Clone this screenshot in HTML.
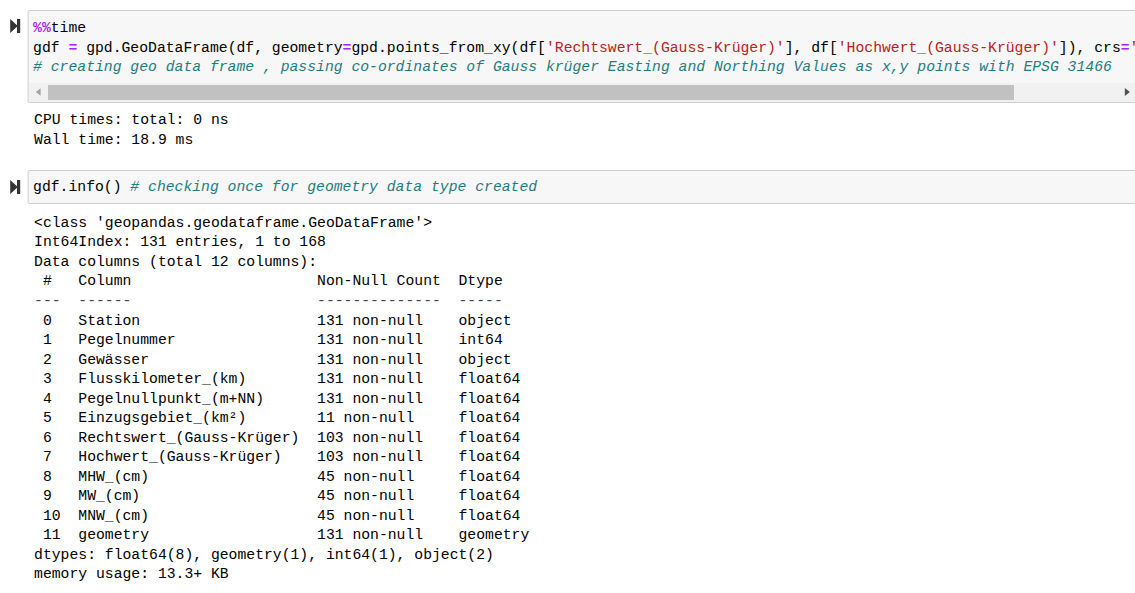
<!DOCTYPE html>
<html><head><meta charset="utf-8">
<style>
html,body{margin:0;padding:0;background:#fff;}
body{width:1135px;height:593px;overflow:hidden;position:relative;font-family:"Liberation Mono","DejaVu Sans Mono",monospace;font-size:14.74px;color:#000;}
pre{margin:0;font:inherit;white-space:pre;position:absolute;line-height:19.53px;}
.box{position:absolute;left:28px;transform:translateX(-0.4px);width:1200px;background:#f7f7f7;border:1px solid #cfcfcf;border-radius:2px;box-sizing:border-box;}
.op{color:#aa22ff;font-weight:bold;}.m{color:#aa22ff;font-weight:bold;}
.s{color:#ba2121;}
.c{color:#1f7c80;font-style:italic;}
.icon{position:absolute;left:10.3px;width:10.4px;height:14px;}
</style></head><body>
<div class="box" style="top:10px;height:93px;"></div>
<svg class="icon" style="top:19px" viewBox="0 0 10.4 14"><path d="M0.2 0 L7.8 7 L0.2 14 Z M7 0 H10.2 V14 H7 Z" fill="#333"/></svg>
<pre style="left:33.1px;top:18.8px;line-height:19.75px;"><span class="m">%%</span>time
gdf <span class="op">=</span> gpd.GeoDataFrame(df, geometry<span class="op">=</span>gpd.points_from_xy(df[<span class="s">'Rechtswert_(Gauss-Krüger)'</span>], df[<span class="s">'Hochwert_(Gauss-Krüger)'</span>]), crs<span class="op">=</span><span class="s">'</span>
<span class="c"># creating geo data frame , passing co-ordinates of Gauss krüger Easting and Northing Values as x,y points with EPSG 31466</span></pre>
<div style="position:absolute;left:29px;top:83px;width:1110px;height:19px;background:#f1f1f1;"></div>
<div style="position:absolute;left:48px;top:85px;width:966px;height:15px;background:#c1c1c1;"></div>
<svg style="position:absolute;left:34px;top:87px;width:10px;height:10px" viewBox="0 0 10 10"><path d="M6.6 1.3 L1.8 5 L6.6 8.7 Z" fill="#a3a3a3"/></svg>
<svg style="position:absolute;left:1120px;top:86px;width:12px;height:12px" viewBox="0 0 12 12"><path d="M4.8 1.9 L9.9 6 L4.8 10.1 Z" fill="#505050"/></svg>
<pre style="left:34.1px;top:111.3px;">CPU times: total: 0 ns
Wall time: 18.9 ms</pre>
<div class="box" style="top:170px;height:34px;"></div>
<svg class="icon" style="top:180px" viewBox="0 0 10.4 14"><path d="M0.2 0 L7.8 7 L0.2 14 Z M7 0 H10.2 V14 H7 Z" fill="#333"/></svg>
<pre style="left:33.1px;top:178.4px;">gdf.info() <span class="c"># checking once for geometry data type created</span></pre>
<pre style="left:34.1px;top:213.9px;">&lt;class 'geopandas.geodataframe.GeoDataFrame'&gt;
Int64Index: 131 entries, 1 to 168
Data columns (total 12 columns):
 #   Column                     Non-Null Count  Dtype   
<span style="color:#444">---  ------                     --------------  -----   </span>
 0   Station                    131 non-null    object  
 1   Pegelnummer                131 non-null    int64   
 2   Gewässer                   131 non-null    object  
 3   Flusskilometer_(km)        131 non-null    float64 
 4   Pegelnullpunkt_(m+NN)      131 non-null    float64 
 5   Einzugsgebiet_(km²)        11 non-null     float64 
 6   Rechtswert_(Gauss-Krüger)  103 non-null    float64 
 7   Hochwert_(Gauss-Krüger)    103 non-null    float64 
 8   MHW_(cm)                   45 non-null     float64 
 9   MW_(cm)                    45 non-null     float64 
 10  MNW_(cm)                   45 non-null     float64 
 11  geometry                   131 non-null    geometry
dtypes: float64(8), geometry(1), int64(1), object(2)
memory usage: 13.3+ KB</pre>
</body></html>
